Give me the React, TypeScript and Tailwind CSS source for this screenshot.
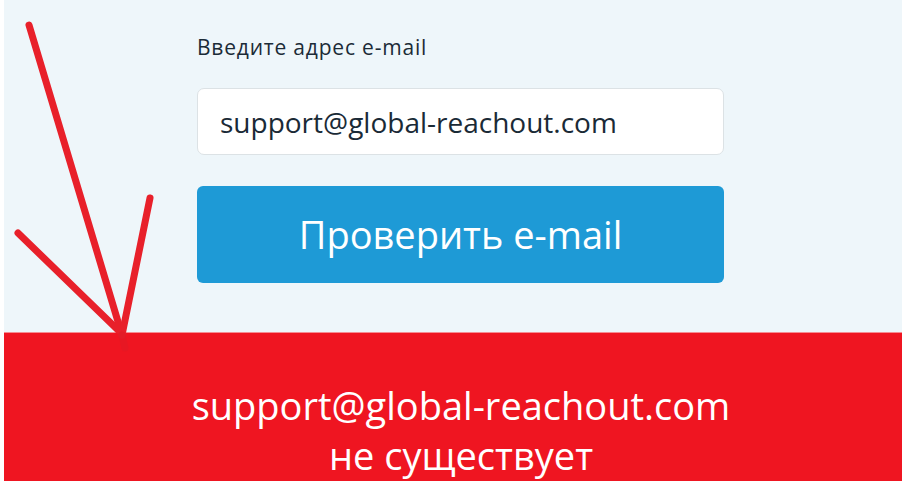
export default function App() {
  const font = { fontFamily: '"Open Sans", "Noto Sans", sans-serif' };
  return (
    <div className="relative w-[902px] h-[481px] overflow-hidden bg-white" style={font}>
      <div className="ml-[4px] flex h-full flex-col bg-[#eef6fa]">
        <div className="h-[332px] shrink-0 pl-[193px] pt-[33px]">
          <div className="w-[527px]">
            <div className="text-[21px] leading-[28px] tracking-[0.8px] text-[#1b2b37]">Введите адрес e-mail</div>
            <div className="mt-[27px] flex h-[67px] items-center rounded-[7px] border border-[#dce2e5] bg-white pl-[22px] text-[28px] text-[#1a2a36]">
              support@global-reachout.com
            </div>
            <button className="mt-[31px] flex h-[97px] w-full items-center justify-center rounded-[6px] bg-[#1e9ad6] text-[38px] text-white">
              Проверить e-mail
            </button>
          </div>
        </div>
        <div className="flex flex-1 flex-col items-center border-t border-[#f58d93] bg-[#ef1521] pl-[16px] pt-[47px] text-white">
          <div className="text-[38px] leading-[50px]">support@global-reachout.com</div>
          <div className="text-[38px] leading-[50px]">не существует</div>
        </div>
      </div>
      <svg className="pointer-events-none absolute left-0 top-0" width="902" height="481" viewBox="0 0 902 481">
        <g stroke="#e8202a" strokeWidth="7" strokeLinecap="round" fill="none">
          <line x1="29" y1="25" x2="122" y2="335" />
          <line x1="150" y1="198" x2="122" y2="335" />
          <line x1="18" y1="233" x2="118" y2="330" />
        </g>
        <line x1="122" y1="335" x2="125" y2="348" stroke="#e01a26" strokeWidth="7" strokeLinecap="round" opacity="0.5" />
      </svg>
    </div>
  );
}
